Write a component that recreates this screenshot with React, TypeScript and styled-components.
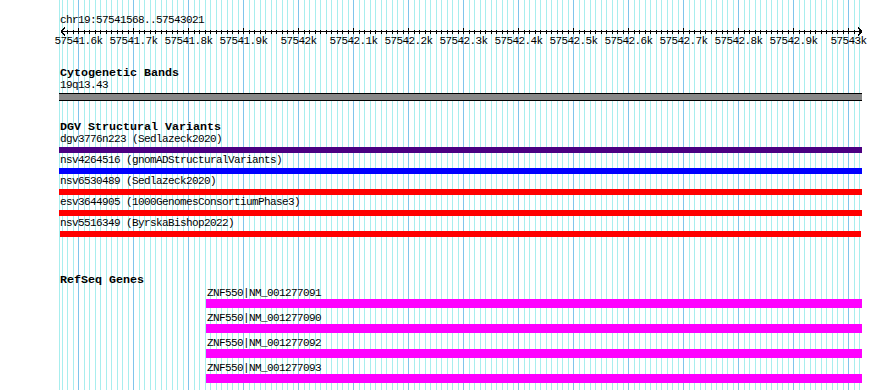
import styled, { createGlobalStyle } from 'styled-components';

// window in bp and how it maps onto the image
const START = 57541568;
const END = 57543021;
const PX_PER_BP = 0.55;
const X0 = 60.4;
const TRACK_LEFT = 59;
const TRACK_RIGHT = 862;
const TRACK_WIDTH = TRACK_RIGHT - TRACK_LEFT;

const xOf = (bp: number) => X0 + (bp - START) * PX_PER_BP;

const GlobalStyle = createGlobalStyle`
  html, body {
    margin: 0;
    padding: 0;
    background: #fff;
  }
  body {
    font-family: "Liberation Mono", "DejaVu Sans Mono", monospace;
    color: #000;
  }
`;

const Page = styled.div`
  position: relative;
  width: 890px;
  height: 390px;
  overflow: hidden;
  background: #fff;
`;

const GridLayer = styled.svg`
  position: absolute;
  top: 0;
  left: 0;
  pointer-events: none;
`;

const Tracks = styled.div`
  position: relative;
  z-index: 1;
  display: flex;
  flex-direction: column;
  padding-left: ${TRACK_LEFT}px;
  width: ${TRACK_WIDTH}px;
`;

const RulerSection = styled.div`
  height: 46px;
`;

const PositionLabel = styled.div`
  margin-left: 1px;
  padding-top: 14px;
  height: 12px;
  line-height: 12px;
  font-size: 11px;
  letter-spacing: -0.6px;
  white-space: nowrap;
`;

const Axis = styled.svg`
  display: block;
  overflow: visible;
`;

const TrackTitle = styled.div<{ $top: number }>`
  margin-top: ${(p) => p.$top}px;
  margin-left: 1px;
  height: 12px;
  line-height: 12px;
  font-size: 11.67px;
  font-weight: bold;
  white-space: nowrap;
`;

const FeatureLabel = styled.div<{ $top: number; $indent: number }>`
  margin-top: ${(p) => p.$top}px;
  margin-left: ${(p) => p.$indent + 1}px;
  height: 11px;
  line-height: 11px;
  font-size: 11px;
  letter-spacing: -0.6px;
  white-space: nowrap;
`;

const FeatureBar = styled.div<{
  $top: number;
  $left: number;
  $width: number;
  $height: number;
  $color: string;
}>`
  margin-top: ${(p) => p.$top}px;
  margin-left: ${(p) => p.$left}px;
  width: ${(p) => p.$width}px;
  height: ${(p) => p.$height}px;
  background: ${(p) => p.$color};
  flex-shrink: 0;
`;

const BandBar = styled.div`
  margin-top: 2px;
  width: ${TRACK_WIDTH}px;
  height: 6px;
  border-top: 1px solid #000;
  border-bottom: 1px solid #000;
  background: #888;
`;

interface Variant {
  name: string;
  color: string;
  left?: number;
  right?: number;
}

const VARIANTS: Variant[] = [
  { name: 'dgv3776n223 (Sedlazeck2020)', color: '#4b0082' },
  { name: 'nsv4264516 (gnomADStructuralVariants)', color: '#0000ff' },
  { name: 'nsv6530489 (Sedlazeck2020)', color: '#ff0000' },
  { name: 'esv3644905 (1000GenomesConsortiumPhase3)', color: '#ff0000' },
  { name: 'nsv5516349 (ByrskaBishop2022)', color: '#ff0000', left: 60, right: 861 },
];

const GENES = ['ZNF550|NM_001277091', 'ZNF550|NM_001277090', 'ZNF550|NM_001277092', 'ZNF550|NM_001277093'];
const GENE_LEFT = 206;

const gridLines = () => {
  const lines = [];
  for (let bp = Math.ceil(START / 10) * 10; bp <= END; bp += 10) {
    const x = Math.round(xOf(bp)) + 0.5;
    const major = bp % 100 === 0;
    lines.push({ x, major, bp });
  }
  return lines;
};

const formatTick = (bp: number) => {
  const k = bp / 1000;
  return Number.isInteger(k) ? `${k}k` : `${k.toFixed(1)}k`;
};

const Grid = () => (
  <GridLayer width={890} height={390}>
    <line x1={59.5} x2={59.5} y1={0} y2={390} stroke="#a8eeee" />
    {gridLines().map((l) => (
      <line key={l.bp} x1={l.x} x2={l.x} y1={0} y2={390} stroke={l.major ? '#80c4ec' : '#a8eeee'} />
    ))}
  </GridLayer>
);

const Ruler = () => {
  const ticks = gridLines();
  const y = 5.5;
  const a = 1 - TRACK_LEFT;
  const b = TRACK_RIGHT - TRACK_LEFT;
  return (
    <RulerSection>
      <PositionLabel>chr19:{START}..{END}</PositionLabel>
      <Axis width={TRACK_WIDTH} height={20}>
        <g stroke="#000" strokeWidth={1} shapeRendering="crispEdges">
          <line x1={a + 60} x2={b} y1={y} y2={y} />
          <line x1={a + 60} x2={a + 64} y1={y} y2={y - 4} />
          <line x1={a + 60} x2={a + 64} y1={y} y2={y + 4} />
          <line x1={b} x2={b - 4} y1={y} y2={y - 4} />
          <line x1={b} x2={b - 4} y1={y} y2={y + 4} />
          {ticks.map((t) => (
            <line
              key={t.bp}
              x1={t.x - TRACK_LEFT}
              x2={t.x - TRACK_LEFT}
              y1={t.major ? y - 4 : y - 2}
              y2={y + 2.5}
            />
          ))}
        </g>
        {ticks
          .filter((t) => t.major)
          .map((t) => (
            <text
              key={t.bp}
              x={t.x - TRACK_LEFT}
              y={18}
              textAnchor="middle"
              fontFamily='"Liberation Mono", monospace'
              fontSize={11}
              letterSpacing={-0.6}
            >
              {formatTick(t.bp)}
            </text>
          ))}
      </Axis>
    </RulerSection>
  );
};

export default function App() {
  return (
    <Page>
      <GlobalStyle />
      <Grid />
      <Tracks>
        <Ruler />

        <TrackTitle $top={21}>Cytogenetic Bands</TrackTitle>
        <FeatureLabel $top={1} $indent={0}>
          19q13.43
        </FeatureLabel>
        <BandBar />

        <TrackTitle $top={20}>DGV Structural Variants</TrackTitle>
        {VARIANTS.map((v, i) => {
          const left = v.left ?? TRACK_LEFT;
          const right = v.right ?? TRACK_RIGHT;
          return (
            <div key={v.name}>
              <FeatureLabel $top={i === 0 ? 1 : 2} $indent={0}>
                {v.name}
              </FeatureLabel>
              <FeatureBar
                $top={2}
                $left={left - TRACK_LEFT}
                $width={right - left}
                $height={6}
                $color={v.color}
              />
            </div>
          );
        })}

        <TrackTitle $top={37}>RefSeq Genes</TrackTitle>
        {GENES.map((g, i) => (
          <div key={g}>
            <FeatureLabel $top={i === 0 ? 2 : 5} $indent={GENE_LEFT - TRACK_LEFT}>
              {g}
            </FeatureLabel>
            <FeatureBar
              $top={0}
              $left={GENE_LEFT - TRACK_LEFT}
              $width={TRACK_RIGHT - GENE_LEFT}
              $height={9}
              $color="#ff00ff"
            />
          </div>
        ))}
      </Tracks>
    </Page>
  );
}
